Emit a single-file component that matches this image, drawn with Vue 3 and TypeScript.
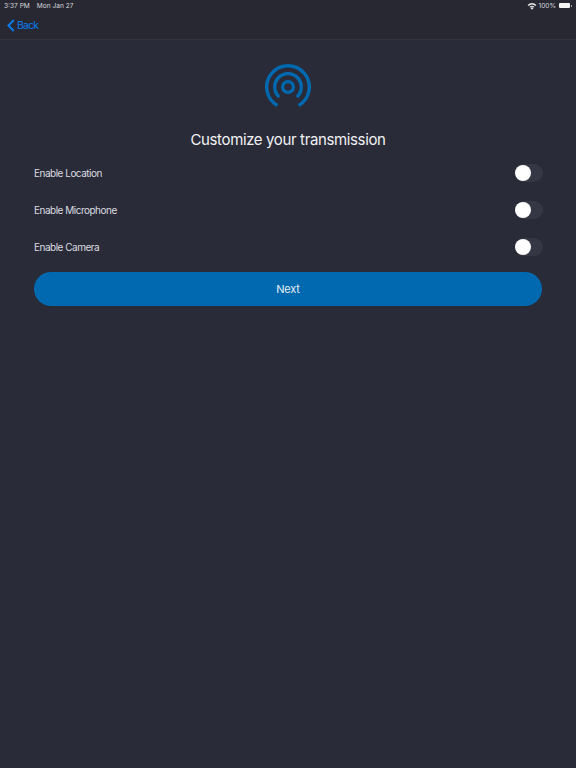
<script setup lang="ts">
const rows: string[] = ['Enable Location', 'Enable Microphone', 'Enable Camera']
</script>

<template>
  <div class="page">
    <header class="bar">
      <div class="status">
        <div class="status-side">
          <span>3:37 PM</span>
          <span>Mon Jan 27</span>
        </div>
        <div class="status-side right">
          <svg width="10" height="8" viewBox="0 0 10 8" class="wifi">
            <path d="M5 7.8 L3.4 5.9 A2.4 2.4 0 0 1 6.6 5.9 Z" fill="#e8e8ea" />
            <path d="M2.5 4.9 A3.8 3.8 0 0 1 7.5 4.9 L6.9 5.6 A2.9 2.9 0 0 0 3.1 5.6 Z" fill="#e8e8ea" />
            <path d="M0.6 2.9 A6.3 6.3 0 0 1 9.4 2.9 L8.3 4.1 A4.8 4.8 0 0 0 1.7 4.1 Z" fill="#e8e8ea" />
          </svg>
          <span>100%</span>
          <span class="battery"><span class="fill"></span><span class="tip"></span></span>
        </div>
      </div>
      <div class="nav">
        <svg width="8" height="13" viewBox="0 0 8 13" class="chev">
          <path d="M6.8 1 L1.4 6.5 L6.8 12" fill="none" stroke="#0a7cf0" stroke-width="1.9" />
        </svg>
        <span class="back">Back</span>
      </div>
    </header>
    <main class="content">
      <svg class="logo" width="46" height="46" viewBox="0 0 46 46">
        <g fill="none" stroke="#0069af" stroke-width="3.4">
          <circle cx="23" cy="23" r="5.4" />
          <path d="M14.3 33 A13.3 13.3 0 1 1 31.7 33" />
          <path d="M12.35 41.45 A21.3 21.3 0 1 1 33.65 41.45" />
        </g>
      </svg>
      <h1 class="title">Customize your transmission</h1>
      <div class="rows">
        <div v-for="row in rows" :key="row" class="row">
          <span class="label">{{ row }}</span>
          <span class="toggle"><span class="knob"></span></span>
        </div>
      </div>
      <button class="next">Next</button>
    </main>
  </div>
</template>

<style>
html, body { margin: 0; background: #292b38; }
</style>

<style scoped>
.page {
  width: 576px;
  height: 768px;
  background: #292b38;
  font-family: Inter, "Liberation Sans", sans-serif;
  overflow: hidden;
}
.bar {
  height: 40px;
  box-sizing: border-box;
  background: #272832;
  border-bottom: 1px solid #30323f;
}
.status {
  height: 11px;
  padding: 0 4px;
  display: flex;
  justify-content: space-between;
  align-items: center;
  font-size: 6.6px;
  color: #d8d8dc;
}
.status-side { display: flex; align-items: center; gap: 7px; }
.status-side.right { gap: 2px; }
.battery { display: flex; align-items: center; gap: 1px; margin-left: 1px; }
.fill { display: block; width: 11px; height: 5px; background: #f4f4f4; border-radius: 1px; }
.tip { display: block; width: 1px; height: 2px; background: #9a9a9e; }
.nav {
  height: 28px;
  padding-left: 7px;
  display: flex;
  align-items: center;
  gap: 2px;
}
.chev { display: block; }
.back { font-size: 10.5px; letter-spacing: -0.8px; color: #0a7cf0; }
.content {
  padding: 24px 34px 0;
  display: flex;
  flex-direction: column;
  align-items: center;
}
.logo { display: block; }
.title {
  margin: 20px 0 0;
  font-size: 15px;
  letter-spacing: -0.37px;
  line-height: 20px;
  font-weight: 400;
  color: #f2f2f4;
}
.rows { width: 100%; margin-top: 4px; }
.row {
  height: 37.4px;
  display: flex;
  justify-content: space-between;
  align-items: center;
}
.label { font-size: 10px; letter-spacing: -0.5px; color: #dcdce0; }
.toggle {
  width: 28px;
  height: 18px;
  margin-right: -1px;
  border-radius: 9px;
  background: #353744;
  display: flex;
  align-items: center;
}
.knob {
  width: 16px;
  height: 16px;
  border-radius: 50%;
  background: #fff;
}
.next {
  width: 100%;
  height: 34px;
  margin-top: 5.5px;
  border: 0;
  border-radius: 17px;
  background: #0069af;
  color: #e8eef4;
  font-family: inherit;
  font-size: 11px;
  letter-spacing: -0.2px;
}
</style>
